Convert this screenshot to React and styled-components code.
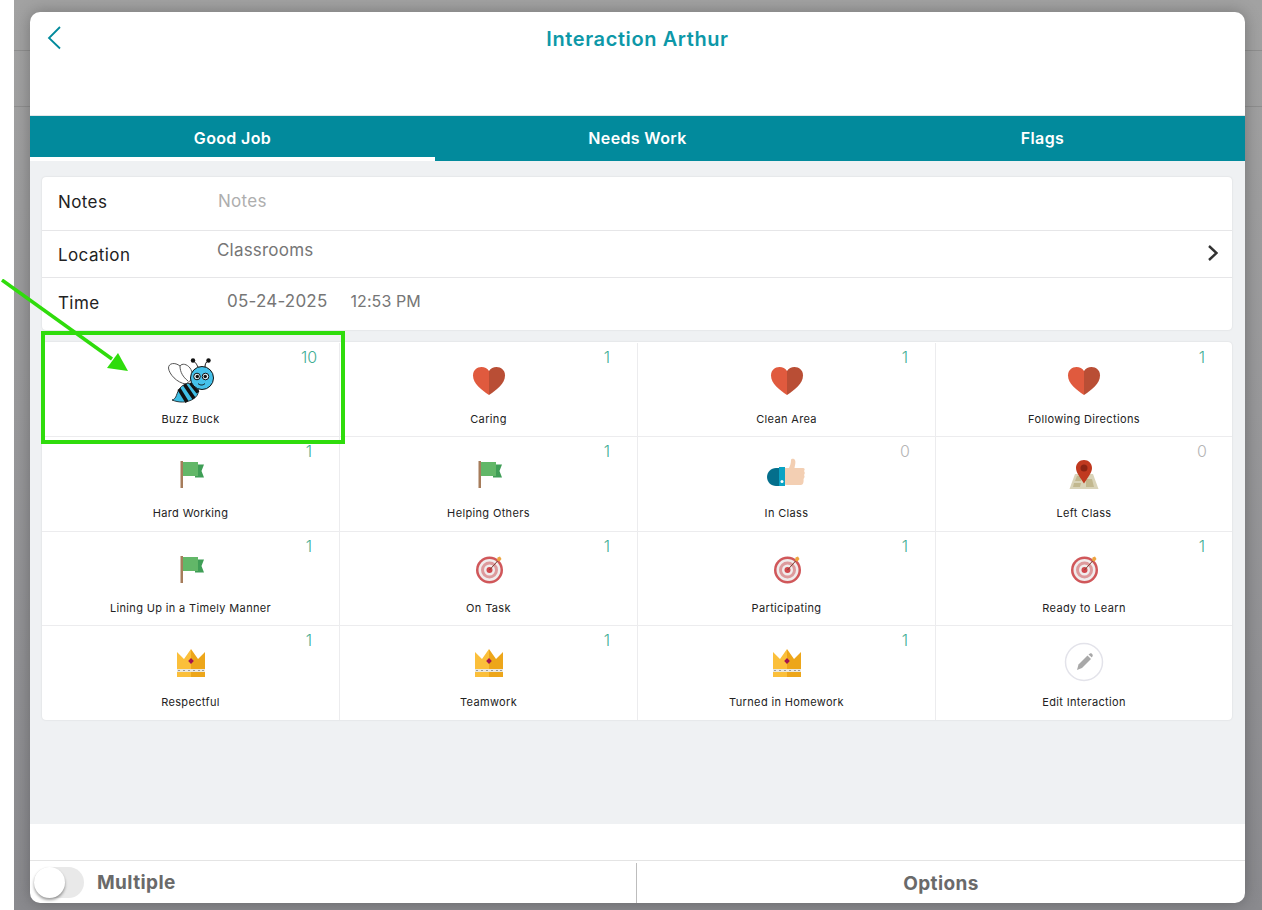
import React from 'react';
import styled, { createGlobalStyle } from 'styled-components';

const GlobalStyle = createGlobalStyle`
  html, body {
    margin: 0;
    padding: 0;
    background: #fff;
    overflow: hidden;
  }
  * { box-sizing: border-box; }
`;

const FONT = `Inter, "Open Sans", "Liberation Sans", sans-serif`;
const TEAL = '#028a9c';

const Heart = () => (
  <svg width="36" height="32" viewBox="0 0 36 32">
    <path d="M18 30C10 24.500 2 18.500 2 10.500C2 5 6 2 10.500 2C13.500 2 16.500 3.500 18 6Z" fill="#e05a3e" />
    <path d="M18 30C26 24.500 34 18.500 34 10.500C34 5 30 2 25.500 2C22.500 2 19.500 3.500 18 6Z" fill="#b94e35" />
  </svg>
);

const Flag = () => (
  <svg width="26" height="28" viewBox="0 0 26 28">
    <rect x="2.500" y="0" width="2.500" height="27" fill="#a67c5b" />
    <path d="M17 3.500H26L23.500 10L26 16.500H17Z" fill="#3f9e56" />
    <rect x="5" y="1" width="15" height="14" fill="#62b768" />
  </svg>
);

const Thumb = () => (
  <svg width="40" height="34" viewBox="0 0 40 34">
    <path d="M16 10H22C23 8 24 5 24 2C24 0.500 27 0 28 2C29 4 28 7 27.500 10H36C38 10 38 12 37 13C38 14 38 16 37 17C38 18 37.500 20 36.500 21C37 24 36 27 34 27H20C18 27 16 26 16 26Z" fill="#f3cfb3" />
    <path d="M12 10V28H9C4 28 0 24 0 19C0 14 4 10 9 10Z" fill="#046f8c" />
    <rect x="12" y="9" width="6" height="19" fill="#0aa3c4" />
    <circle cx="15" cy="23.500" r="1.500" fill="#fff" />
  </svg>
);

const MapPin = () => (
  <svg width="30" height="30" viewBox="0 0 30 30">
    <path d="M6 14H24L29.500 29H0.500Z" fill="#d9d3b8" />
    <path d="M8 16H13L12 21H6ZM17 19H23L25 27H17ZM5 23H12L11 27H4Z" fill="#c2b88f" />
    <path d="M15 23.500C11 17 7 12.500 7 8C7 3.500 10.500 0 15 0C19.500 0 23 3.500 23 8C23 12.500 19 17 15 23.500Z" fill="#c0391f" />
    <circle cx="15" cy="8" r="3.500" fill="#8a2413" />
  </svg>
);

const Target = () => (
  <svg width="30" height="30" viewBox="0 1 30 30">
    <circle cx="15.500" cy="16" r="13.500" fill="#d0575a" />
    <circle cx="15.500" cy="16" r="11" fill="#f0ecec" />
    <circle cx="15.500" cy="16" r="8.500" fill="#dd9a9c" />
    <circle cx="15.500" cy="16" r="5.500" fill="#f0ecec" />
    <circle cx="15.500" cy="16" r="3" fill="#d0484c" />
    <line x1="15.500" y1="16" x2="24.500" y2="6" stroke="#7a4034" strokeWidth="1" />
    <path d="M23.500 3.500L26 2.500L27.500 5L25.500 7.500L23 6.500Z" fill="#eda43f" />
  </svg>
);

const Crown = () => (
  <svg width="30" height="30" viewBox="0 0 30 30">
    <path d="M1 3L8 10L15 0V20H1Z" fill="#fbbf3a" />
    <path d="M29 3L22 10L15 0V20H29Z" fill="#eda61a" />
    <path d="M15 9L17.800 12L15 15L12.200 12Z" fill="#a3144f" />
    <rect x="1" y="20" width="28" height="3" fill="#ece8dd" />
    <rect x="2" y="21" width="2" height="1" fill="#999" />
    <rect x="7" y="21" width="2" height="1" fill="#999" />
    <rect x="12" y="21" width="2" height="1" fill="#999" />
    <rect x="17" y="21" width="2" height="1" fill="#999" />
    <rect x="22" y="21" width="2" height="1" fill="#999" />
    <rect x="26" y="21" width="2" height="1" fill="#999" />
    <rect x="1" y="23" width="14" height="5" fill="#fbbf3a" />
    <rect x="15" y="23" width="14" height="5" fill="#eda61a" />
  </svg>
);

const Pencil = () => (
  <svg width="40" height="44" viewBox="0 0 40 44">
    <circle cx="20" cy="20" r="18.500" fill="#fff" stroke="#e3e3ea" strokeWidth="1.500" />
    <path d="M13 28L14.500 22.500L23.500 13.500L27 17L18 26Z" fill="#a8a8a8" />
    <path d="M24.500 12.500L26 11.500C27 11 28 11.500 28.500 12.500C29 13.500 28.800 14.200 28 15L27.800 15.500Z" fill="#a8a8a8" />
  </svg>
);

const Bee = () => (
  <svg width="48" height="48" viewBox="0 0 48 48">
    <path d="M19 27C10 26 2 17 1.500 11C1.500 6 8 5 13 9C15 6 20 7 23 11C26 15 25 20 24 23Z" fill="#fff" stroke="#555" strokeWidth="1" />
    <path d="M13 9C13 15 16 20 21 24" fill="none" stroke="#555" strokeWidth="1" />
    <path d="M5 43C10 42 9 36 13 31C17 26 24 25 29 28C33 32 32 38 27 41.500C20 46.500 11 45.500 5 43Z" fill="#3fbfe6" stroke="#111" strokeWidth="0.800" />
    <path d="M12 32L20 45M17.500 27.500L27 41.500M23.500 26L31 35.500" stroke="#111" strokeWidth="3.600" fill="none" />
    <circle cx="35" cy="21" r="11.500" fill="#45c1ea" stroke="#111" strokeWidth="1" />
    <path d="M31 10C29 6 28 5 26.500 4M38 10C38 7 39 5 41 4" fill="none" stroke="#111" strokeWidth="1" />
    <circle cx="26" cy="3.500" r="2.200" fill="#111" />
    <circle cx="41.500" cy="3.500" r="2.200" fill="#111" />
    <circle cx="30" cy="19.500" r="3.300" fill="#dff3fa" stroke="#111" strokeWidth="1" />
    <circle cx="38.500" cy="19.500" r="3.300" fill="#dff3fa" stroke="#111" strokeWidth="1" />
    <circle cx="30.300" cy="19.500" r="1.700" fill="#111" />
    <circle cx="38.200" cy="19.500" r="1.700" fill="#111" />
    <path d="M31 26.500C33 28.500 36 28.500 38 26.500" fill="none" stroke="#111" strokeWidth="1" />
  </svg>
);

const interactions = [
  { name: 'Buzz Buck', count: 10, icon: <Bee /> },
  { name: 'Caring', count: 1, icon: <Heart /> },
  { name: 'Clean Area', count: 1, icon: <Heart /> },
  { name: 'Following Directions', count: 1, icon: <Heart /> },
  { name: 'Hard Working', count: 1, icon: <Flag /> },
  { name: 'Helping Others', count: 1, icon: <Flag /> },
  { name: 'In Class', count: 0, icon: <Thumb /> },
  { name: 'Left Class', count: 0, icon: <MapPin /> },
  { name: 'Lining Up in a Timely Manner', count: 1, icon: <Flag /> },
  { name: 'On Task', count: 1, icon: <Target /> },
  { name: 'Participating', count: 1, icon: <Target /> },
  { name: 'Ready to Learn', count: 1, icon: <Target /> },
  { name: 'Respectful', count: 1, icon: <Crown /> },
  { name: 'Teamwork', count: 1, icon: <Crown /> },
  { name: 'Turned in Homework', count: 1, icon: <Crown /> },
  { name: 'Edit Interaction', icon: <Pencil /> },
];

const App = () => (
  <Page>
    <GlobalStyle />
    <Backdrop>
      <BehindBar $height={51} />
      <BehindBar $height={56} />
    </Backdrop>
    <Modal>
      <Header>
        <BackButton aria-label="Back">
          <svg width="14" height="24" viewBox="0 0 14 24">
            <path d="M13 1L2 12L13 22.500" fill="none" stroke={TEAL} strokeWidth="1.800" />
          </svg>
        </BackButton>
        <Title>Interaction Arthur</Title>
      </Header>
      <Tabs>
        <Tab $active>Good Job</Tab>
        <Tab>Needs Work</Tab>
        <Tab>Flags</Tab>
      </Tabs>
      <Content>
        <FormCard>
          <FormRow $height={54}>
            <RowLabel $shift={-2}>Notes</RowLabel>
            <Placeholder>Notes</Placeholder>
          </FormRow>
          <FormRow $height={47}>
            <RowLabel $shift={1}>Location</RowLabel>
            <RowValue $shift={-4}>Classrooms</RowValue>
            <Chevron width="12" height="18" viewBox="0 0 12 18">
              <path d="M2 2L9.500 9L2 16" fill="none" stroke="#333" strokeWidth="2.400" />
            </Chevron>
          </FormRow>
          <FormRow $height={52}>
            <RowLabel $shift={-1}>Time</RowLabel>
            <DateValue $shift={-3}>05-24-2025</DateValue>
            <TimeValue $shift={-3}>12:53 PM</TimeValue>
          </FormRow>
        </FormCard>
        <Grid>
          {interactions.map((item) => (
            <Cell key={item.name}>
              {item.count !== undefined && <Count $zero={item.count === 0}>{item.count}</Count>}
              <IconSlot>{item.icon}</IconSlot>
              <CellLabel>{item.name}</CellLabel>
            </Cell>
          ))}
        </Grid>
      </Content>
      <FooterGap />
      <Footer>
        <ToggleSide>
          <Toggle><Knob /></Toggle>
          <FooterText>Multiple</FooterText>
        </ToggleSide>
        <OptionsSide>
          <FooterText>Options</FooterText>
        </OptionsSide>
      </Footer>
    </Modal>
    <Highlight />
    <Arrow width="140" height="100" viewBox="0 0 140 100">
      <line x1="2" y1="1" x2="112" y2="80" stroke="#2fdc0c" strokeWidth="3.500" />
      <path d="M128 92L107 89L118 74Z" fill="#2fdc0c" />
    </Arrow>
  </Page>
);

const Page = styled.div`
  position: relative;
  width: 1262px;
  height: 910px;
  padding-left: 14px;
  font-family: ${FONT};
  overflow: hidden;
`;

const Backdrop = styled.div`
  height: 100%;
  background: linear-gradient(to bottom, #a2a2a2 0%, #98989a 45%, #8a8a8e 100%);
`;

const BehindBar = styled.div`
  height: ${(p) => p.$height}px;
  border-bottom: 1px solid #8e8e8e;
`;

const Modal = styled.div`
  position: absolute;
  left: 30px;
  top: 12px;
  width: 1215px;
  height: 891px;
  display: flex;
  flex-direction: column;
  background: #fff;
  border-radius: 10px;
  overflow: hidden;
  box-shadow: 0 0 16px rgba(0, 0, 0, 0.28);
`;

const Header = styled.div`
  height: 104px;
  flex: none;
  display: flex;
  justify-content: center;
  padding-top: 14px;
  position: relative;
  border-bottom: 1px solid #e3e6e8;
`;

const BackButton = styled.div`
  position: absolute;
  left: 17px;
  top: 14px;
  line-height: 0;
`;

const Title = styled.div`
  color: #0d98a8;
  font-size: 20px;
  font-weight: 600;
  line-height: 26px;
  letter-spacing: 0.6px;
`;

const Tabs = styled.div`
  display: grid;
  grid-template-columns: repeat(3, 1fr);
  height: 45px;
  flex: none;
  background: ${TEAL};
`;

const Tab = styled.div`
  display: flex;
  align-items: center;
  justify-content: center;
  color: #fff;
  font-size: 16px;
  font-weight: 600;
  letter-spacing: 0.35px;
  padding-top: 3px;
  border-bottom: 4px solid ${(p) => (p.$active ? '#fff' : 'transparent')};
`;

const Content = styled.div`
  height: 663px;
  flex: none;
  background: #eff1f3;
  padding: 16px 13px 0 12px;
`;

const FormCard = styled.div`
  background: #fff;
  border-radius: 4px;
  box-shadow: 0 0 2px rgba(0, 0, 0, 0.12);
`;

const FormRow = styled.div`
  height: ${(p) => p.$height}px;
  display: flex;
  align-items: center;
  padding: 0 13px 0 16px;
  border-bottom: 1px solid #e6e6e8;
  &:last-child { border-bottom: none; }
`;

const RowLabel = styled.div`
  width: 159px;
  flex: none;
  font-size: 17px;
  letter-spacing: 0.4px;
  color: #222;
  transform: translateY(${(p) => p.$shift || 0}px);
`;

const Placeholder = styled.div`
  font-size: 17px;
  letter-spacing: 0.3px;
  color: #aeaeae;
  margin-left: 1px;
  transform: translateY(-3px);
`;

const RowValue = styled.div`
  font-size: 17px;
  letter-spacing: 0.2px;
  color: #767676;
  transform: translateY(${(p) => p.$shift || 0}px);
`;

const DateValue = styled(RowValue)`
  margin-left: 10px;
  margin-right: 23px;
`;

const TimeValue = styled(RowValue)`
  font-size: 16px;
  letter-spacing: 0.1px;
`;

const Chevron = styled.svg`
  margin-left: auto;
  margin-bottom: 2px;
`;

const Grid = styled.div`
  margin-top: 12px;
  padding-top: 1px;
  display: grid;
  grid-template-columns: 298px 298px 298px 296px;
  grid-auto-rows: 94.25px;
  background: #fff;
  border-radius: 4px;
  box-shadow: 0 0 2px rgba(0, 0, 0, 0.12);
  overflow: hidden;
`;

const Cell = styled.div`
  position: relative;
  display: flex;
  flex-direction: column;
  align-items: center;
  border-right: 1px solid #ececee;
  border-bottom: 1px solid #ececee;
  &:nth-child(4n) { border-right: none; }
  &:nth-last-child(-n + 4) { border-bottom: none; }
`;

const Count = styled.span`
  position: absolute;
  top: 5px;
  right: 20px;
  width: 20px;
  text-align: center;
  font-size: 16px;
  font-weight: 300;
  line-height: 18px;
  color: ${(p) => (p.$zero ? '#b5b5b5' : '#3fae94')};
`;

const IconSlot = styled.div`
  height: 62px;
  padding-top: 14px;
  display: flex;
  align-items: center;
  justify-content: center;
`;

const CellLabel = styled.div`
  font-size: 11px;
  line-height: 14px;
  color: #222;
  letter-spacing: 0.35px;
  margin-top: 7px;
`;

const FooterGap = styled.div`
  height: 37px;
  flex: none;
  border-bottom: 1px solid #e4e4e4;
`;

const Footer = styled.div`
  flex: 1;
  display: flex;
`;

const ToggleSide = styled.div`
  width: 606px;
  flex: none;
  display: flex;
  align-items: center;
  padding-left: 4px;
  gap: 13px;
`;

const Toggle = styled.div`
  width: 50px;
  height: 31px;
  border-radius: 16px;
  background: #e9e9e9;
`;

const Knob = styled.div`
  width: 31px;
  height: 31px;
  border-radius: 50%;
  background: #fff;
  box-shadow: 0 2px 3px rgba(0, 0, 0, 0.4);
`;

const FooterText = styled.div`
  font-size: 19px;
  font-weight: 700;
  letter-spacing: 0.4px;
  color: #6a6a6a;
  padding-top: 1px;
`;

const OptionsSide = styled.div`
  flex: 1;
  display: flex;
  align-items: center;
  justify-content: center;
  margin-top: 2px;
  border-left: 1px solid #bdbdbd;
`;

const Highlight = styled.div`
  position: absolute;
  left: 41px;
  top: 331px;
  width: 304px;
  height: 113px;
  border: 4px solid #2fdc0c;
  pointer-events: none;
`;

const Arrow = styled.svg`
  position: absolute;
  left: 0;
  top: 279px;
`;

export default App;
